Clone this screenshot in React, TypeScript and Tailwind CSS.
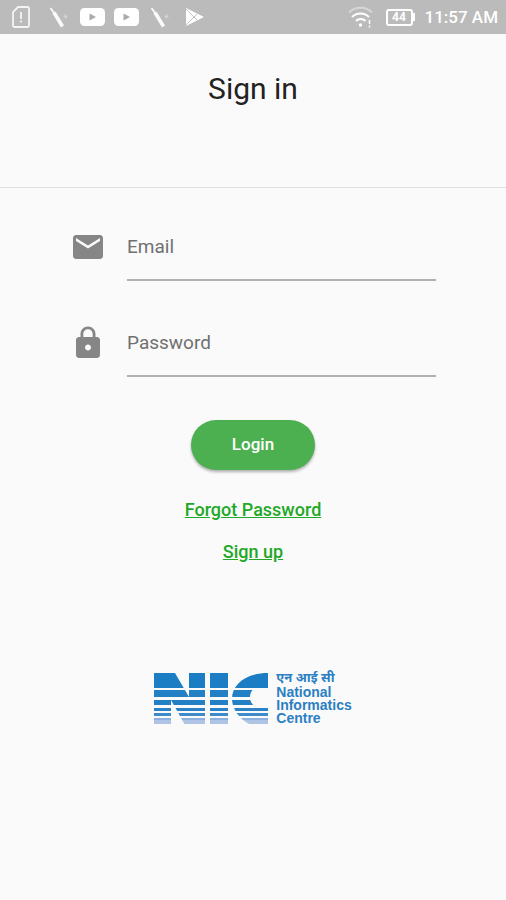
import type { ReactNode } from 'react'

function SimAlertIcon() {
  return (
    <svg width="18" height="22" viewBox="0 0 18 22" fill="none" stroke="#f4f4f4" strokeWidth="1.8">
      <path d="M6 1h9.500a1.500 1.500 0 0 1 1.500 1.500v17a1.500 1.500 0 0 1-1.500 1.500h-13A1.500 1.500 0 0 1 1 19.500V6z" />
      <path d="M9 6v7M9 14.500v2" />
    </svg>
  )
}

function WandIcon() {
  return (
    <svg width="18" height="22" viewBox="0 0 18 22" fill="none" stroke="#fafafa">
      <path d="M.5 2l5 7" strokeWidth="1.800" />
      <path d="M4 6.500l8.500 14" strokeWidth="3.600" />
      <path d="M13.500 10.500h4M15.500 8.500v4" strokeWidth="1.500" strokeOpacity="0.4" />
    </svg>
  )
}

function VideoIcon() {
  return (
    <svg width="25" height="18" viewBox="0 0 25 18">
      <rect width="25" height="18" rx="4.500" fill="#fff" />
      <path d="M9.500 5.500v7L16 9z" fill="#aaa" />
    </svg>
  )
}

function PlayStoreIcon() {
  return (
    <svg width="20" height="20" viewBox="0 0 20 20">
      <path d="M1 1l18 9L1 19z" fill="#fff" />
      <path d="M1 2l12 12M1 18L13 6" stroke="#c4c4c4" fill="none" />
    </svg>
  )
}

function WifiIcon() {
  return (
    <svg width="26" height="22" viewBox="0 0 26 22" fill="none" stroke="#fff" strokeWidth="2">
      <path d="M1 6.500a16.500 16.500 0 0 1 23 0" strokeOpacity="0.4" />
      <path d="M4 11a12 12 0 0 1 17 0" />
      <path d="M8 15a6.500 6.500 0 0 1 9.500 0" />
      <circle cx="12.500" cy="19" r="1.700" fill="#fff" stroke="none" />
      <path d="M21.500 14v4M21.500 19.500v2" strokeWidth="1.500" />
    </svg>
  )
}

function StatusBar() {
  return (
    <header className="flex h-[34px] items-center justify-between bg-[#bbbbbb] pl-3 pr-2">
      <div className="flex items-center">
        <SimAlertIcon />
        <div className="ml-5">
          <WandIcon />
        </div>
        <div className="ml-3 flex gap-[9px]">
          <VideoIcon />
          <VideoIcon />
        </div>
        <div className="ml-3">
          <WandIcon />
        </div>
        <div className="ml-4">
          <PlayStoreIcon />
        </div>
      </div>
      <div className="flex items-center text-white">
        <WifiIcon />
        <div className="ml-3 flex items-center">
          <div className="flex h-[17px] w-[27px] items-center justify-center rounded-[3px] border-2 border-white text-[12px] leading-none font-bold">
            44
          </div>
          <div className="h-2 w-[2px] bg-white" />
        </div>
        <span className="ml-[10px] text-[17px] leading-5 font-medium">11:57 AM</span>
      </div>
    </header>
  )
}

function MailIcon() {
  return (
    <svg width="36" height="36" viewBox="0 0 24 24" fill="#868686">
      <path d="M20 4H4c-1.100 0-1.990.900-1.990 2L2 18c0 1.100.900 2 2 2h16c1.100 0 2-.900 2-2V6c0-1.100-.900-2-2-2zm0 4l-8 5-8-5V6l8 5 8-5v2z" />
    </svg>
  )
}

function LockIcon() {
  return (
    <svg width="36" height="36" viewBox="0 0 24 24" fill="#868686">
      <path d="M18 8h-1V6c0-2.760-2.240-5-5-5S7 3.240 7 6v2H6c-1.100 0-2 .900-2 2v10c0 1.100.900 2 2 2h12c1.100 0 2-.900 2-2V10c0-1.100-.900-2-2-2zm-6 9c-1.100 0-2-.900-2-2s.900-2 2-2 2 .900 2 2-.900 2-2 2zm3.100-9H8.900V6c0-1.710 1.390-3.100 3.100-3.100 1.710 0 3.100 1.390 3.100 3.100v2z" />
    </svg>
  )
}

type FieldProps = {
  id: string
  label: string
  type: string
  icon: ReactNode
}

function Field({ id, label, type, icon }: FieldProps) {
  return (
    <div className="flex items-start gap-[21px]">
      <label htmlFor={id} aria-label={label} className="mt-4">
        {icon}
      </label>
      <input
        id={id}
        type={type}
        placeholder={label}
        className="h-[68px] min-w-0 flex-1 border-b-2 border-[#b0b0b0] text-[19px] text-[#333] outline-none placeholder:text-[#707070]"
      />
    </div>
  )
}

const stripes = [
  { y: 0, height: 15, fill: '#1b7dc4' },
  { y: 17, height: 7, fill: '#2380c5' },
  { y: 27, height: 5, fill: '#2380c5' },
  { y: 35, height: 3, fill: '#2b82c6' },
  { y: 40, height: 3, fill: '#3f8ac9' },
  { y: 45, height: 2, fill: '#8eb0dc' },
  { y: 47, height: 4, fill: '#afc3e4' },
]

function NicLogo() {
  return (
    <div className="flex gap-2">
      <svg width="114" height="52" viewBox="0 0 114 52" className="mt-[5px]" aria-label="NIC">
        <clipPath id="nic">
          <path d="M0 0H21L35 24V0H51V52H31L17 27V52H0z" />
          <path d="M56 0H74V52H56z" />
          <path d="M114 0V15H102C98 16 96 20 96 24S98 32 102 34H114V52H97C86 47 78 36 78 26C78 12 91 0 114 0z" />
        </clipPath>
        <g clipPath="url(#nic)">
          {stripes.map((s) => (
            <rect key={s.y} width="114" y={s.y} height={s.height} fill={s.fill} />
          ))}
        </g>
      </svg>
      <div className="pt-[3px] font-['Liberation_Sans','Noto_Sans',sans-serif] text-[14px] leading-[13px] font-bold text-[#2b7fc3]">
        <p lang="hi" className="mb-[2px] text-[13px]">
          एन आई सी
        </p>
        <p>National</p>
        <p>Informatics</p>
        <p>Centre</p>
      </div>
    </div>
  )
}

export default function App() {
  return (
    <div className="min-h-screen bg-[#fafafa] font-[Roboto,sans-serif]">
      <StatusBar />
      <div className="h-[154px] border-b border-[#e0e0e0] pt-[37px] text-center">
        <h1 className="text-[30px] leading-9 text-[#222]">Sign in</h1>
      </div>
      <main>
        <form className="flex flex-col pt-[25px]" onSubmit={(e) => e.preventDefault()}>
          <div className="flex flex-col gap-7 px-[70px]">
            <Field id="email" label="Email" type="email" icon={<MailIcon />} />
            <Field id="password" label="Password" type="password" icon={<LockIcon />} />
          </div>
          <button
            type="submit"
            className="mt-[43px] h-[50px] w-[124px] self-center rounded-full bg-[#4caf50] text-[17px] font-medium text-white shadow-[0_2px_3px_rgba(0,0,0,0.3)]"
          >
            Login
          </button>
        </form>
        <nav className="mt-7 flex flex-col items-center gap-[18px] text-[18px] leading-6 font-medium text-[#22a827]">
          <a href="#forgot" className="underline">
            Forgot Password
          </a>
          <a href="#signup" className="underline">
            Sign up
          </a>
        </nav>
        <div className="mt-[104px] flex justify-center">
          <NicLogo />
        </div>
      </main>
    </div>
  )
}
